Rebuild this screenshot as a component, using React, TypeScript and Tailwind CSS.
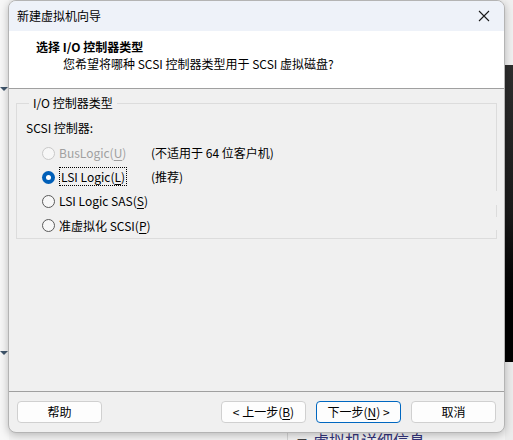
import React from "react";

const font = { fontFamily: '"Noto Sans CJK SC", "Noto Sans", sans-serif' };

function U({ children }: { children: React.ReactNode }) {
  return <span className="underline underline-offset-2 decoration-1">{children}</span>;
}

function Radio({ checked, disabled }: { checked?: boolean; disabled?: boolean }) {
  if (checked) {
    return (
      <span className="w-[13px] h-[13px] rounded-full bg-[#005fb8] flex items-center justify-center shrink-0">
        <span className="w-[5px] h-[5px] rounded-full bg-white" />
      </span>
    );
  }
  return (
    <span
      className={
        "w-[13px] h-[13px] rounded-full border shrink-0 bg-[#f7f7f7] " +
        (disabled ? "border-[#c8c8c8]" : "border-[#5a5a5a]")
      }
    />
  );
}

function Btn({ children, primary }: { children: React.ReactNode; primary?: boolean }) {
  return (
    <div
      className={
        "w-[85px] h-[22px] rounded-[4px] bg-[#fdfdfd] border flex items-center justify-center text-[12px] text-black " +
        (primary ? "border-[#0067c0]" : "border-[#d0d0d0]")
      }
    >
      {children}
    </div>
  );
}

export default function App() {
  return (
    <div className="relative w-[513px] h-[440px] overflow-hidden bg-[#f3f3f3]" style={font}>
      {/* background app */}
      <div className="absolute left-0 top-0 w-[9px] h-[440px] bg-[#f7f7f7]" />
      <div className="absolute left-0 top-[87px] w-0 h-0 border-l-[4px] border-r-[4px] border-t-[4px] border-l-transparent border-r-transparent border-t-[#3f556b]" />
      <div className="absolute left-0 top-[351px] w-0 h-0 border-l-[4px] border-r-[4px] border-t-[4px] border-l-transparent border-r-transparent border-t-[#3f556b]" />
      <div className="absolute left-[505px] top-0 w-[8px] h-[65px] bg-[#f0f0f0]" />
      <div className="absolute left-[505px] top-[65px] w-[8px] h-[297px] bg-gradient-to-b from-[#2e2e2e] via-[#1a1a1a] to-black" />
      <div className="absolute left-[505px] top-[362px] w-[8px] h-[78px] bg-[#ececec]" />
      <div className="absolute left-[287px] top-[424px] w-px h-[16px] bg-[#d4d4d4]" />
      <div className="absolute left-[297px] top-[430px] text-[16px] leading-[20px] text-[#33337a] whitespace-nowrap">
        <span className="text-[10px] text-[#444] mr-[6px]">▼</span>虚拟机详细信息
      </div>

      {/* dialog */}
      <div className="absolute left-[8px] top-0 w-[497px] h-[433px] rounded-[8px] border border-[#b4b4b4] bg-[#f0f0f0] overflow-hidden shadow-[0_2px_8px_rgba(0,0,0,0.25)] flex flex-col">
        {/* title bar */}
        <div className="h-[30px] bg-[#eef2f9] flex items-center justify-between pl-[8px] pr-[9px] shrink-0">
          <span className="text-[12px] text-black">新建虚拟机向导</span>
          <svg width="12" height="12" viewBox="0 0 12 12" className="mr-[5px]">
            <path d="M1 1 L11 11 M11 1 L1 11" stroke="#1a1a1a" strokeWidth="1.1" />
          </svg>
        </div>
        {/* header */}
        <div className="h-[58px] bg-white border-b border-[#a0a0a0] shrink-0 flex flex-col pt-[7px]">
          <div className="pl-[27px] text-[12px] font-bold leading-[17px] text-black">选择 I/O 控制器类型</div>
          <div className="pl-[54px] text-[12px] leading-[17px] text-black">
            您希望将哪种 SCSI 控制器类型用于 SCSI 虚拟磁盘?
          </div>
        </div>
        {/* body */}
        <div className="flex-1 pt-[6px] px-[7px]">
          <fieldset className="relative w-[481px] h-[144px] border border-[#dcdcdc] px-[9px] pt-[9px]">
            <legend className="ml-[3px] px-[4px] text-[12px] leading-[16px] text-black">I/O 控制器类型</legend>
            <div className="absolute right-[-1px] top-[80px] w-px h-[14px] bg-[#f0f0f0]" />
            <div className="absolute right-[-1px] top-[106px] w-px h-[13px] bg-[#f0f0f0]" />
            <div className="text-[12px] leading-[16px] text-black">SCSI 控制器:</div>
            <div className="flex flex-col mt-[5px] pl-[16px] text-[12px] text-black">
              <div className="h-[24px] flex items-center">
                <Radio disabled />
                <span className="ml-[4px] w-[92px] text-[#a0a0a0]">
                  BusLogic(<U>U</U>)
                </span>
                <span>(不适用于 64 位客户机)</span>
              </div>
              <div className="h-[24px] flex items-center">
                <Radio checked />
                <span className="ml-[4px] w-[92px]">
                  <span className="border border-dotted border-black px-px">
                    LSI Logic(<U>L</U>)
                  </span>
                </span>
                <span>(推荐)</span>
              </div>
              <div className="h-[24px] flex items-center">
                <Radio />
                <span className="ml-[4px]">
                  LSI Logic SAS(<U>S</U>)
                </span>
              </div>
              <div className="h-[25px] flex items-center">
                <Radio />
                <span className="ml-[4px]">
                  准虚拟化 SCSI(<U>P</U>)
                </span>
              </div>
            </div>
          </fieldset>
        </div>
        {/* footer */}
        <div className="h-[41px] border-t border-[#a0a0a0] shrink-0 flex items-start pt-[9px] px-[8px]">
          <Btn>帮助</Btn>
          <div className="flex-1" />
          <div className="flex gap-[10px]">
            <Btn>
              &lt; 上一步(<U>B</U>)
            </Btn>
            <Btn primary>
              下一步(<U>N</U>) &gt;
            </Btn>
            <Btn>取消</Btn>
          </div>
        </div>
      </div>
    </div>
  );
}
